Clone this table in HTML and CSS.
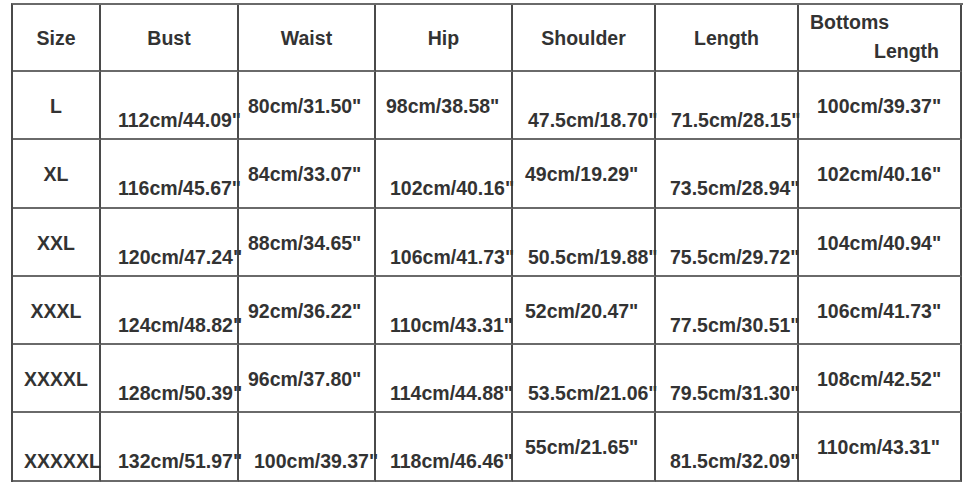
FILE: index.html
```html
<!DOCTYPE html>
<html lang="en">
<head>
<meta charset="utf-8">
<title>Size Chart</title>
<link rel="stylesheet" href="styles.css">
</head>
<body>
<div class="chart">
  <div class="cell head row-h">Size</div>
  <div class="cell head row-h">Bust</div>
  <div class="cell head row-h">Waist</div>
  <div class="cell head row-h">Hip</div>
  <div class="cell head row-h">Shoulder</div>
  <div class="cell head row-h">Length</div>
  <div class="cell head2 row-h"><span class="l1">Bottoms</span><span class="l2">Length</span></div>

  <div class="cell size t">L</div>
  <div class="cell b in17">112cm/44.09"</div>
  <div class="cell t in9">80cm/31.50"</div>
  <div class="cell t in10">98cm/38.58"</div>
  <div class="cell b in15">47.5cm/18.70"</div>
  <div class="cell b in15">71.5cm/28.15"</div>
  <div class="cell t in18">100cm/39.37"</div>

  <div class="cell size t">XL</div>
  <div class="cell b in17">116cm/45.67"</div>
  <div class="cell t in9">84cm/33.07"</div>
  <div class="cell b in14">102cm/40.16"</div>
  <div class="cell t in12">49cm/19.29"</div>
  <div class="cell b in14">73.5cm/28.94"</div>
  <div class="cell t in18">102cm/40.16"</div>

  <div class="cell size t">XXL</div>
  <div class="cell b in17">120cm/47.24"</div>
  <div class="cell t in9">88cm/34.65"</div>
  <div class="cell b in14">106cm/41.73"</div>
  <div class="cell b in15">50.5cm/19.88"</div>
  <div class="cell b in14">75.5cm/29.72"</div>
  <div class="cell t in18">104cm/40.94"</div>

  <div class="cell size t">XXXL</div>
  <div class="cell b in17">124cm/48.82"</div>
  <div class="cell t in9">92cm/36.22"</div>
  <div class="cell b in14">110cm/43.31"</div>
  <div class="cell t in12">52cm/20.47"</div>
  <div class="cell b in14">77.5cm/30.51"</div>
  <div class="cell t in18">106cm/41.73"</div>

  <div class="cell size t">XXXXL</div>
  <div class="cell b in17">128cm/50.39"</div>
  <div class="cell t in9">96cm/37.80"</div>
  <div class="cell b in14">114cm/44.88"</div>
  <div class="cell b in15">53.5cm/21.06"</div>
  <div class="cell b in14">79.5cm/31.30"</div>
  <div class="cell t in18">108cm/42.52"</div>

  <div class="cell b in11">XXXXXL</div>
  <div class="cell b in17">132cm/51.97"</div>
  <div class="cell b in15">100cm/39.37"</div>
  <div class="cell b in14">118cm/46.46"</div>
  <div class="cell t in12">55cm/21.65"</div>
  <div class="cell b in14">81.5cm/32.09"</div>
  <div class="cell t in18">110cm/43.31"</div>
</div>
</body>
</html>
```
FILE: styles.css
```css
html, body {
  margin: 0;
  padding: 0;
  background: #ffffff;
}

body {
  font-family: "Liberation Sans", Arial, sans-serif;
  font-weight: bold;
  font-size: 19.5px;
  line-height: 22px;
  color: #333333;
}

.chart {
  margin: 3px 0 0 11px;
  width: 950px;
  display: grid;
  grid-template-columns: 88px 138px 137px 137px 143px 143px 163px;
  grid-template-rows: 67px 68px 69px 68px 68px 68px 69px;
  border-top: 2px solid #6a6a6a;
  border-left: 2px solid #4a4a4a;
}

.cell {
  border-right: 2px solid #4a4a4a;
  border-bottom: 2px solid #6a6a6a;
  white-space: nowrap;
  box-sizing: border-box;
}

.head {
  text-align: center;
  padding-top: 22px;
}

.head2 {
  display: flex;
  flex-direction: column;
  padding-top: 6px;
  gap: 7px;
}

.head2 .l1 {
  padding-left: 11px;
}

.head2 .l2 {
  padding-left: 75px;
}

.size {
  text-align: center;
}

.t {
  padding-top: 23px;
}

.b {
  padding-top: 37px;
}

.in9 { padding-left: 9px; }
.in10 { padding-left: 10px; }
.in11 { padding-left: 11px; }
.in12 { padding-left: 12px; }
.in14 { padding-left: 14px; }
.in15 { padding-left: 15px; }
.in17 { padding-left: 17px; }
.in18 { padding-left: 18px; }
```
